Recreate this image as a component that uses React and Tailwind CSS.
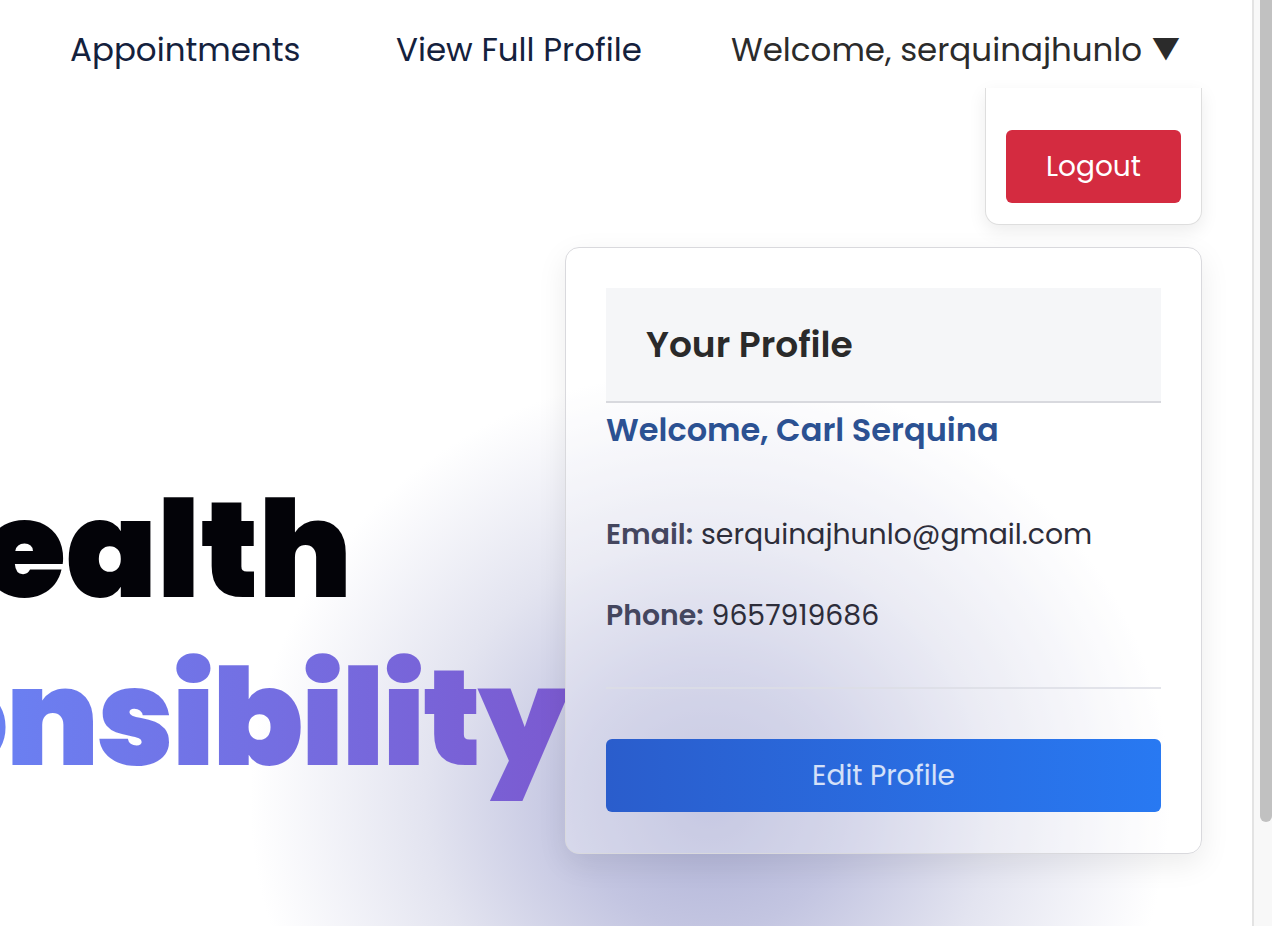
import React from 'react';

const font = { fontFamily: '"Poppins", "Inter", "Noto Sans", sans-serif' };

function Scrollbar() {
  return (
    <div className="w-[20px] h-full shrink-0 border-l-2 border-[#e3e3e3] bg-[#f8f8f8] flex justify-end">
      <div className="w-[12px] h-[822px] bg-[#c1c1c1] rounded-b-[6px]" />
    </div>
  );
}

function ProfileCard() {
  return (
    <div className="w-[637px] h-[607px] rounded-[14px] border border-[#d9d9dd] bg-white/30 shadow-[0_10px_30px_rgba(0,0,0,0.08)] p-10 flex flex-col">
      {/* header */}
      <div className="h-[115px] shrink-0 bg-[#f4f5f7]/90 border-b-2 border-[#d8d9de] flex items-center pl-10">
        <h2 className="text-[36px] font-semibold text-[#2a2a2a]">Your Profile</h2>
      </div>

      <div className="h-[54px] shrink-0 flex items-center">
        <p className="text-[32px] font-semibold text-[#2b5192]">Welcome, Carl Serquina</p>
      </div>

      <div className="h-[54px] mt-[50px] shrink-0 flex items-center text-[28.3px]">
        <span className="font-semibold text-[#44465e] mr-[8px]">Email:</span>
        <span className="text-[#2d2d3a]">serquinajhunlo@gmail.com</span>
      </div>

      <div className="h-[54px] mt-[27px] shrink-0 flex items-center text-[28.3px]">
        <span className="font-semibold text-[#44465e] mr-[8px]">Phone:</span>
        <span className="text-[#2d2d3a]">9657919686</span>
      </div>

      <div className="h-[2px] mt-[45px] shrink-0 bg-[#dcdde5]/80" />

      <button className="h-[73px] mt-[50px] shrink-0 w-full rounded-[6px] bg-gradient-to-r from-[#2a5dcc] to-[#2879f2] text-[28px] text-white/80">
        Edit Profile
      </button>
    </div>
  );
}

export default function App() {
  return (
    <div className="w-full h-[926px] flex overflow-hidden bg-white" style={font}>
      <main className="relative flex-1 h-full bg-[radial-gradient(ellipse_460px_430px_at_710px_800px,#aeb1d6_0%,#c3c5e1_30%,#e3e4f0_62%,#ffffff_100%)]">
        {/* Nav */}
        <nav className="h-[100px] flex items-center pl-[70px]">
          <a className="w-[326px] text-[32.5px] text-[#14213d]">Appointments</a>
          <a className="w-[335px] text-[32.5px] text-[#14213d]">View Full Profile</a>
          <button className="text-[32.5px] text-[#2b2b2b] flex items-center">
            Welcome, serquinajhunlo
            <span className="ml-[9px] text-[29px] text-[#2b2b2b]">▼</span>
          </button>
        </nav>

        {/* Dropdown menu */}
        <div className="absolute right-[50px] top-[88px] w-[217px] bg-white border border-t-0 border-[#dedede] rounded-b-[14px] shadow-[0_6px_18px_rgba(0,0,0,0.08)] pt-[42px] px-[20px] pb-[21px]">
          <button className="w-full h-[73px] rounded-[6px] bg-[#d42b40] text-white text-[28px]">Logout</button>
        </div>

        {/* Body */}
        <div className="flex">
          <div className="w-[565px] shrink-0 overflow-hidden pt-[365px] font-black">
            <div className="w-[352px] flex justify-end leading-[171px] text-[134px] text-[#030308] whitespace-nowrap">
              <span>Your Health</span>
            </div>
            <div className="w-[567px] -mt-[3px] flex justify-end leading-[171px] text-[134px] tracking-[-2.5px] whitespace-nowrap bg-gradient-to-r from-[#6a80f2] to-[#7b5ad0] bg-clip-text text-transparent">
              <span>Our Responsibility</span>
            </div>
          </div>
          <div className="pt-[147px]">
            <ProfileCard />
          </div>
        </div>
      </main>
      <Scrollbar />
    </div>
  );
}
